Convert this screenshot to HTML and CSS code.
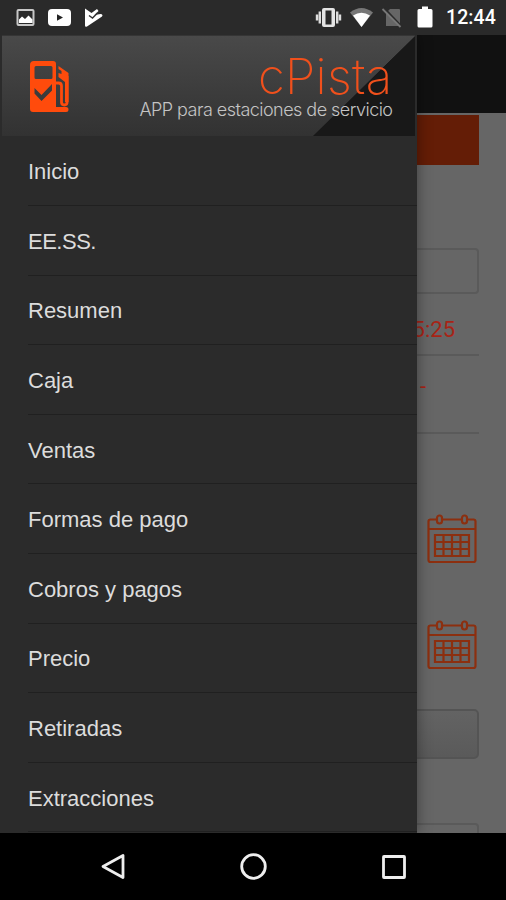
FILE: index.html
```html
<!DOCTYPE html>
<html lang="es">
<head>
<meta charset="utf-8">
<title>cPista</title>
<link rel="stylesheet" href="styles.css">
</head>
<body>
<div class="phone">
  <header class="status">
    <svg class="notifications" width="110" height="35" viewBox="0 0 110 35">
      <path fill="#c8c8c8" fill-rule="evenodd" d="M18.500 9h14q2 0 2 2v13q0 2-2 2h-14q-2 0-2-2V11q0-2 2-2zM18.500 11v13h14V11z"/>
      <path fill="#fff" d="M19 23v-3.500l3-3 3 2.500 3.500-3.500 4 4V23z"/>
      <rect x="48" y="9" width="23" height="17" rx="4" fill="#fff"/>
      <path fill="#222" d="M57 14.300l6 3.200-6 3.200z"/>
      <path fill="#fff" d="M85 8.500l6.500 4.500 5.500-4 1.500 2-4 4 6-1q3 .5 1.500 2.500L87 26.500q-2 .8-2-1z"/>
      <path fill="none" stroke="#333" stroke-width="1.500" d="M89 15.500l3.500 2.500 5-5"/>
    </svg>
    <div class="status-right">
      <svg width="122" height="35" viewBox="312 0 122 35">
        <path fill="#e4e4e4" fill-rule="evenodd" d="M324 8h9q2 0 2 2v15q0 2-2 2h-9q-2 0-2-2V10q0-2 2-2zM325.500 10.500v14h6v-14z"/>
        <path stroke="#ddd" stroke-width="2.400" d="M319.800 11.500v12M317 14.500v6M337.200 11.500v12M340 14.500v6"/>
        <path fill="#777" d="M350 12.500q11.500-9 23 0L361.500 27z"/>
        <path fill="#fff" d="M353 15.500q8.500-5.500 17 0L361.500 27z"/>
        <path fill="#666" d="M390 9h9q1 0 1 1v16h-14V13z"/>
        <path stroke="#2b2b2b" stroke-width="2" d="M384 8l18 19"/>
        <path stroke="#777" stroke-width="1.800" d="M382.500 9l18 18"/>
        <path fill="#fff" d="M419 9h3V6.500h6V9h3q1.500 0 1.500 1.500V26q0 1.500-1.500 1.500h-12q-1.500 0-1.500-1.500V10.500Q417.500 9 419 9z"/>
      </svg>
      <span class="clock">12:44</span>
    </div>
  </header>

  <main class="stage">
    <section class="page">
      <div class="topbar"></div>
      <div class="content">
        <div class="banner"></div>
        <div class="field"></div>
        <div class="value time">5:25</div>
        <div class="value dash">-</div>
        <div class="dates">
          <svg class="calendar" width="50" height="50" viewBox="0 0 50 50">
            <rect x="1.500" y="5.500" width="47" height="42.500" rx="2"/>
            <path d="M1.500 15h47"/>
            <rect class="ring" x="10" y="1.500" width="5" height="8" rx="2.500"/>
            <rect class="ring" x="35" y="1.500" width="5" height="8" rx="2.500"/>
            <path d="M8 21h34v21H8zM8 28h34M8 35h34M16.500 21v21M25 21v21M33.500 21v21"/>
          </svg>
          <svg class="calendar" width="50" height="50" viewBox="0 0 50 50">
            <rect x="1.500" y="5.500" width="47" height="42.500" rx="2"/>
            <path d="M1.500 15h47"/>
            <rect class="ring" x="10" y="1.500" width="5" height="8" rx="2.500"/>
            <rect class="ring" x="35" y="1.500" width="5" height="8" rx="2.500"/>
            <path d="M8 21h34v21H8zM8 28h34M8 35h34M16.500 21v21M25 21v21M33.500 21v21"/>
          </svg>
        </div>
        <div class="button"></div>
        <div class="field last"></div>
      </div>
    </section>

    <aside class="drawer">
      <div class="brand">
        <svg class="pump" width="42" height="53" viewBox="0 0 42 53">
          <path fill="#ff4b0c" fill-rule="evenodd" d="M4 0h19q3 0 3 3v43h10q2.500 0 2.500 2.500T36 51H3q-3 0-3-3V4q0-4 4-4zM6 5q-1.500 0-1.500 1.500v10Q4.500 18 6 18h15q1.500 0 1.500-1.500v-10Q22.500 5 21 5zM4.500 27v5.500L11.500 40 22 29.500V23L11.500 34z"/>
          <path fill="none" stroke="#ff4b0c" stroke-width="2.800" d="M26 22h2.500q3 0 3 3v16q0 3 2.800 3t2.800-3V15"/>
          <path fill="#ff4b0c" d="M28.500 5l10 7v29h-3.500V21l-6.500-5v-4l3 1v-3l-3-2z"/>
        </svg>
        <div class="brand-text">
          <div class="name">cPista</div>
          <div class="tagline">APP para estaciones de servicio</div>
        </div>
      </div>
      <nav class="menu">
        <a>Inicio</a>
        <a class="tight">EE.SS.</a>
        <a>Resumen</a>
        <a>Caja</a>
        <a>Ventas</a>
        <a>Formas de pago</a>
        <a>Cobros y pagos</a>
        <a>Precio</a>
        <a>Retiradas</a>
        <a>Extracciones</a>
      </nav>
    </aside>
  </main>

  <footer class="navbar">
    <svg width="30" height="30" viewBox="0 0 30 30"><path d="M5 14.500L25 3.500v22z"/></svg>
    <svg width="30" height="30" viewBox="0 0 30 30"><circle cx="15.500" cy="14.500" r="11.800"/></svg>
    <svg width="30" height="30" viewBox="0 0 30 30"><rect x="5.500" y="4.500" width="21" height="21" rx=".5"/></svg>
  </footer>
</div>
</body>
</html>
```

FILE: styles.css
```css
* { box-sizing: border-box; }

body {
  margin: 0;
  background: #000;
  font-family: "Liberation Sans", sans-serif;
}

svg { display: block; flex: none; }

.phone {
  width: 506px;
  height: 900px;
  display: flex;
  flex-direction: column;
  overflow: hidden;
}

.status {
  height: 35px;
  flex: none;
  display: flex;
  justify-content: space-between;
  background: #2a2a2a;
}

.status-right { display: flex; align-items: center; }

.clock {
  width: 72px;
  padding: 1px 0 0 12px;
  color: #fff;
  font: 500 19.500px/24px Roboto, sans-serif;
  letter-spacing: 0.1px;
}

.stage {
  position: relative;
  height: 798px;
  flex: none;
  overflow: hidden;
}

.page { height: 100%; background: #666; }

.topbar { height: 78px; background: #111; }

.content {
  display: flex;
  flex-direction: column;
  margin: 0 27px 0 28px;
  padding-top: 2px;
}

.banner { height: 50px; background: #641d06; }

.field {
  height: 46px;
  margin-top: 83px;
  border: 2px solid #5a5a5a;
  border-radius: 4px;
}

.value {
  border-bottom: 2px solid #5a5a5a;
  color: #a82416;
  font: 22px/26px Roboto, sans-serif;
  text-align: right;
}

.time { height: 62px; padding: 23px 24px 0 0; }
.dash { height: 78px; padding: 18px 53px 0 0; }

.dates {
  display: flex;
  flex-direction: column;
  align-items: flex-end;
  gap: 56px;
  margin-top: 80px;
  padding-right: 2px;
}

.calendar { fill: none; stroke: #8c2f0f; stroke-width: 2.200; }
.calendar .ring { fill: #666; }

.button {
  height: 50px;
  margin-top: 39px;
  border: 2px solid #545454;
  border-radius: 5px;
  background: linear-gradient(#636363, #5a5a5a);
}

.last { margin-top: 64px; }

.drawer {
  position: absolute;
  inset: 0 auto 0 0;
  width: 416.500px;
  background: #2b2b2b;
  box-shadow: 0 0 14px rgba(0, 0, 0, 0.4);
}

.brand {
  display: flex;
  justify-content: space-between;
  height: 101px;
  margin: 0 2px 0 2px;
  padding: 25px 22px 0 28px;
  border-top: 1px solid #353535;
  background:
    linear-gradient(135.600deg, transparent 50%, #181818 50.500%) right / 103px 100% no-repeat,
    linear-gradient(#494949, #323232);
}

.brand-text { text-align: right; white-space: nowrap; }

.name {
  height: 38px;
  color: #f0501c;
  font: 200 49px/32px Inter, sans-serif;
  letter-spacing: 0.3px;
}

.tagline {
  color: #c4c4c4;
  font: 300 18px/22px Inter, sans-serif;
  letter-spacing: -0.530px;
}

.menu { display: flex; flex-direction: column; padding: 0.500px 0 0 28px; }

.menu a {
  height: 69.600px;
  flex: none;
  display: flex;
  align-items: center;
  padding-top: 3px;
  border-bottom: 1.500px solid #202020;
  color: #dcdcdc;
  font-size: 22px;
}

.menu .tight { letter-spacing: -0.500px; }

.navbar {
  height: 67px;
  flex: none;
  display: flex;
  justify-content: center;
  align-items: center;
  gap: 110px;
  background: #000;
}

.navbar svg { fill: none; stroke: #eee; stroke-width: 2.800; stroke-linejoin: round; }
```
